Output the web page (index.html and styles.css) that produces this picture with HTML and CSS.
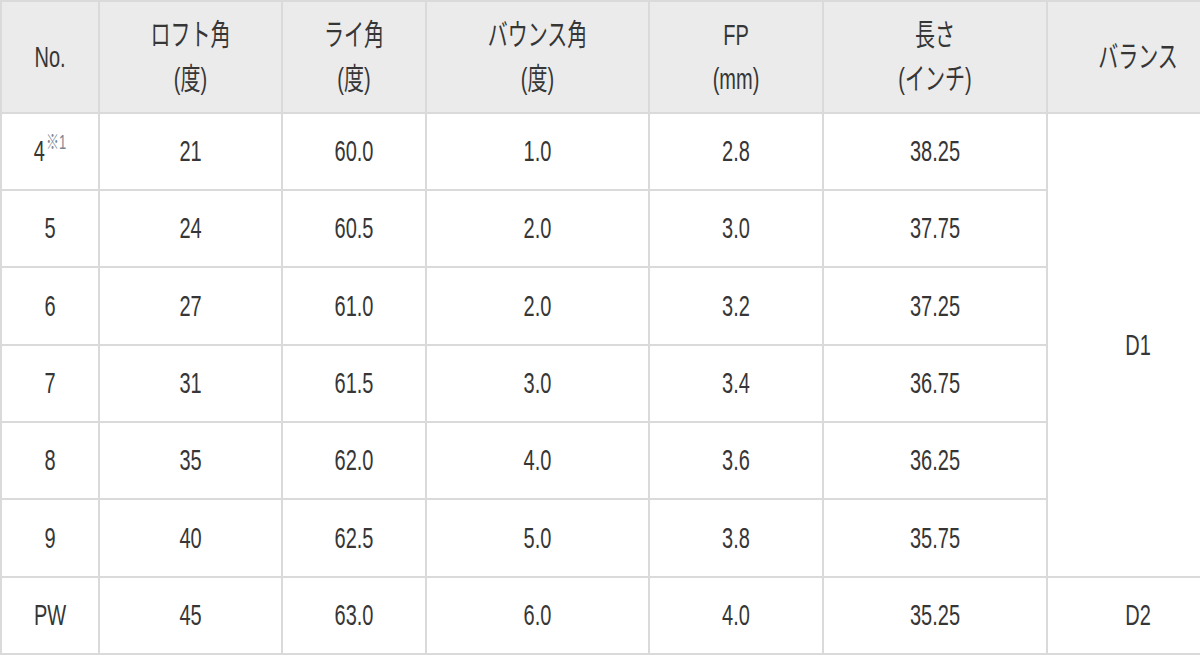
FILE: index.html
```html
<!DOCTYPE html>
<html lang="ja">
<head>
<meta charset="utf-8">
<title>Spec table</title>
<link rel="stylesheet" href="styles.css">
</head>
<body>
<table class="spec">
  <colgroup>
    <col class="c1"><col class="c2"><col class="c3"><col class="c4"><col class="c5"><col class="c6"><col class="c7">
  </colgroup>
  <thead>
    <tr class="head">
      <th><span class="t">No.</span></th>
      <th><span class="t">ロフト角<br>(度)</span></th>
      <th><span class="t">ライ角<br>(度)</span></th>
      <th><span class="t">バウンス角<br>(度)</span></th>
      <th><span class="t">FP<br>(mm)</span></th>
      <th><span class="t">長さ<br>(インチ)</span></th>
      <th><span class="t">バランス</span></th>
    </tr>
  </thead>
  <tbody>
    <tr class="r77">
      <td><span class="t">4<sup class="note">※1</sup></span></td>
      <td><span class="t">21</span></td>
      <td><span class="t">60.0</span></td>
      <td><span class="t">1.0</span></td>
      <td><span class="t">2.8</span></td>
      <td><span class="t">38.25</span></td>
      <td rowspan="6"><span class="t">D1</span></td>
    </tr>
    <tr class="r77">
      <td><span class="t">5</span></td>
      <td><span class="t">24</span></td>
      <td><span class="t">60.5</span></td>
      <td><span class="t">2.0</span></td>
      <td><span class="t">3.0</span></td>
      <td><span class="t">37.75</span></td>
    </tr>
    <tr class="r78">
      <td><span class="t">6</span></td>
      <td><span class="t">27</span></td>
      <td><span class="t">61.0</span></td>
      <td><span class="t">2.0</span></td>
      <td><span class="t">3.2</span></td>
      <td><span class="t">37.25</span></td>
    </tr>
    <tr class="r77">
      <td><span class="t">7</span></td>
      <td><span class="t">31</span></td>
      <td><span class="t">61.5</span></td>
      <td><span class="t">3.0</span></td>
      <td><span class="t">3.4</span></td>
      <td><span class="t">36.75</span></td>
    </tr>
    <tr class="r77">
      <td><span class="t">8</span></td>
      <td><span class="t">35</span></td>
      <td><span class="t">62.0</span></td>
      <td><span class="t">4.0</span></td>
      <td><span class="t">3.6</span></td>
      <td><span class="t">36.25</span></td>
    </tr>
    <tr class="r78">
      <td><span class="t">9</span></td>
      <td><span class="t">40</span></td>
      <td><span class="t">62.5</span></td>
      <td><span class="t">5.0</span></td>
      <td><span class="t">3.8</span></td>
      <td><span class="t">35.75</span></td>
    </tr>
    <tr class="r77">
      <td><span class="t">PW</span></td>
      <td><span class="t">45</span></td>
      <td><span class="t">63.0</span></td>
      <td><span class="t">6.0</span></td>
      <td><span class="t">4.0</span></td>
      <td><span class="t">35.25</span></td>
      <td><span class="t">D2</span></td>
    </tr>
  </tbody>
</table>
</body>
</html>
```

FILE: styles.css
```css
html, body {
  margin: 0;
  padding: 0;
  background: #ffffff;
  overflow: hidden;
}

.spec {
  border-collapse: collapse;
  table-layout: fixed;
  width: 1228px;
  font-family: "Liberation Sans", Arial, "Noto Sans CJK JP", sans-serif;
  font-size: 20px;
  color: #363636;
}

.c1 { width: 98px; }
.c2 { width: 183px; }
.c3 { width: 144px; }
.c4 { width: 223px; }
.c5 { width: 174px; }
.c6 { width: 224px; }
.c7 { width: 182px; }

.spec th,
.spec td {
  border: 2px solid #dadada;
  padding: 0;
  text-align: center;
  vertical-align: middle;
  font-weight: normal;
}

.head {
  height: 112px;
  background: #ebebeb;
}

.r77 { height: 77px; }
.r78 { height: 78px; }

.t {
  display: inline-block;
  line-height: 29px;
  transform: scaleY(1.5);
}

.note {
  font-size: 13px;
  color: #7a8696;
  vertical-align: 8px;
  line-height: 0;
  margin-left: 1px;
}
```
